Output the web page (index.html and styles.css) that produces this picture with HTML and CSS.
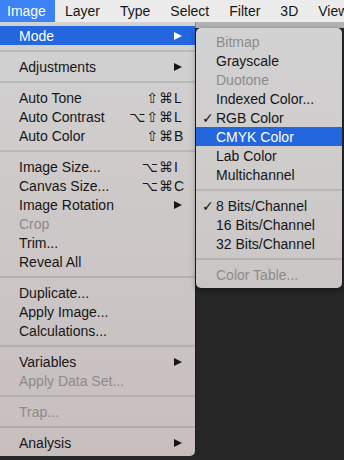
FILE: index.html
```html
<!DOCTYPE html>
<html lang="en">
<head>
    <meta charset="UTF-8">
    <meta name="viewport" content="width=device-width, initial-scale=1.0">
    <title>Image Menu</title>
    <link rel="stylesheet" href="styles.css">
</head>
<body>
    <div class="menubar">
        <span class="bar-item active">Image</span>
        <span class="bar-item">Layer</span>
        <span class="bar-item">Type</span>
        <span class="bar-item">Select</span>
        <span class="bar-item">Filter</span>
        <span class="bar-item">3D</span>
        <span class="bar-item">View</span>
    </div>

    <div class="stage">
        <div class="menu main-menu">
            <div class="row selected"><span class="label">Mode</span><span class="arrow"></span></div>
            <div class="sep"></div>
            <div class="row"><span class="label">Adjustments</span><span class="arrow"></span></div>
            <div class="sep"></div>
            <div class="row"><span class="label">Auto Tone</span><span class="mods">⇧⌘</span><span class="key">L</span></div>
            <div class="row"><span class="label">Auto Contrast</span><span class="mods">⌥⇧⌘</span><span class="key">L</span></div>
            <div class="row"><span class="label">Auto Color</span><span class="mods">⇧⌘</span><span class="key">B</span></div>
            <div class="sep"></div>
            <div class="row"><span class="label">Image Size...</span><span class="mods">⌥⌘</span><span class="key">I</span></div>
            <div class="row"><span class="label">Canvas Size...</span><span class="mods">⌥⌘</span><span class="key">C</span></div>
            <div class="row"><span class="label">Image Rotation</span><span class="arrow"></span></div>
            <div class="row disabled"><span class="label">Crop</span></div>
            <div class="row"><span class="label">Trim...</span></div>
            <div class="row"><span class="label">Reveal All</span></div>
            <div class="sep"></div>
            <div class="row"><span class="label">Duplicate...</span></div>
            <div class="row"><span class="label">Apply Image...</span></div>
            <div class="row"><span class="label">Calculations...</span></div>
            <div class="sep"></div>
            <div class="row"><span class="label">Variables</span><span class="arrow"></span></div>
            <div class="row disabled"><span class="label">Apply Data Set...</span></div>
            <div class="sep"></div>
            <div class="row disabled"><span class="label">Trap...</span></div>
            <div class="sep"></div>
            <div class="row"><span class="label">Analysis</span><span class="arrow"></span></div>
        </div>

        <div class="menu submenu">
            <div class="row disabled"><span class="label">Bitmap</span></div>
            <div class="row"><span class="label">Grayscale</span></div>
            <div class="row disabled"><span class="label">Duotone</span></div>
            <div class="row"><span class="label">Indexed Color...</span></div>
            <div class="row checked"><span class="label">RGB Color</span></div>
            <div class="row selected"><span class="label">CMYK Color</span></div>
            <div class="row"><span class="label">Lab Color</span></div>
            <div class="row"><span class="label">Multichannel</span></div>
            <div class="sep"></div>
            <div class="row checked"><span class="label">8 Bits/Channel</span></div>
            <div class="row"><span class="label">16 Bits/Channel</span></div>
            <div class="row"><span class="label">32 Bits/Channel</span></div>
            <div class="sep"></div>
            <div class="row disabled"><span class="label">Color Table...</span></div>
        </div>
    </div>
</body>
</html>
```

FILE: styles.css
```css
body {
    margin: 0;
    width: 344px;
    height: 460px;
    overflow: hidden;
    font-family: "Liberation Sans", Arial, sans-serif;
    font-size: 14px;
    color: #161616;
    background: linear-gradient(#b3b3b3 28px, #262626 28px);
}
.menubar {
    display: flex;
    height: 22px;
    align-items: center;
    background-color: #ececec;
}
.bar-item {
    height: 22px;
    line-height: 22px;
    padding: 0 10px;
}
.bar-item.active {
    padding: 0 9px 0 7px;
    background-color: #3c82f4;
    color: white;
}
.stage {
    position: relative;
}
.menu {
    box-sizing: border-box;
    padding: 4px 0;
}
.main-menu {
    width: 195px;
    border-radius: 0 0 5px 0;
    background: linear-gradient(#d2d2d2, #cdc8c8 45%, #c8bebe);
    box-shadow: 1px 0 0 rgba(0, 0, 0, 0.25);
}
.submenu {
    position: absolute;
    left: 196px;
    top: 6px;
    width: 146px;
    border-radius: 5px;
    background: linear-gradient(#d3d2d2, #cbc6c6);
    box-shadow: 0 2px 6px rgba(0, 0, 0, 0.35);
}
.row {
    position: relative;
    display: flex;
    align-items: center;
    height: 19px;
    padding: 0 11px 0 19px;
    white-space: nowrap;
}
.submenu .row {
    padding-left: 20px;
}
.label {
    flex: 1;
}
.row.selected {
    background-color: #2466de;
    color: white;
}
.row.disabled {
    color: #8e8a8a;
}
.row.checked::before {
    content: "✓";
    position: absolute;
    left: 6px;
    font-family: "DejaVu Sans", sans-serif;
    font-size: 14px;
    font-weight: bold;
}
.mods {
    font-family: "DejaVu Sans", sans-serif;
    font-size: 14px;
    letter-spacing: 1px;
}
.key {
    width: 10px;
}
.arrow {
    width: 0;
    height: 0;
    margin-right: 2px;
    border-left: 8px solid #161616;
    border-top: 4.5px solid transparent;
    border-bottom: 4.5px solid transparent;
}
.selected .arrow {
    border-left-color: white;
}
.sep {
    height: 12px;
    display: flex;
    align-items: center;
}
.sep::after {
    content: "";
    flex: 1;
    height: 2px;
    background-color: rgba(0, 0, 0, 0.1);
}
```
